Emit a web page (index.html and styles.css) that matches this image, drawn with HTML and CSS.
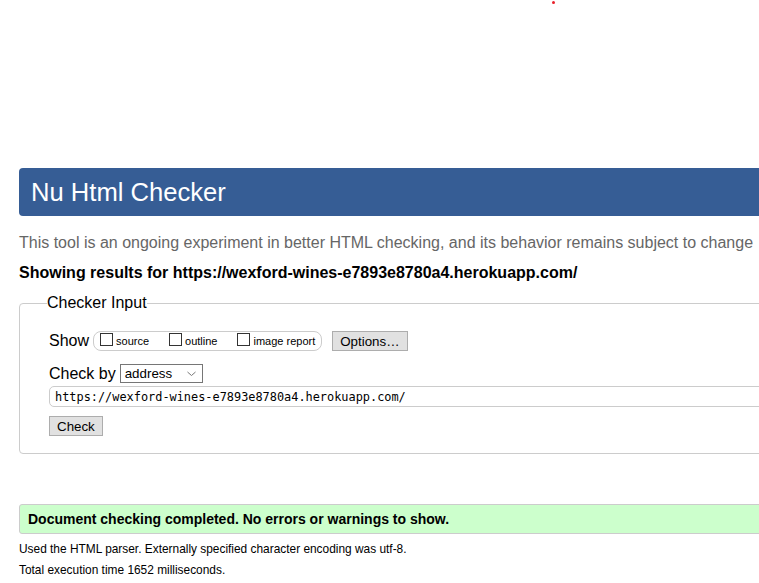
FILE: index.html
```html
<!DOCTYPE html>
<html lang="en">
<head>
<meta charset="utf-8">
<title>Nu Html Checker</title>
<link rel="stylesheet" href="styles.css">
</head>
<body>
<span class="dot"></span>
<div class="page">
  <h1 class="header">Nu Html Checker</h1>
  <p class="intro">This tool is an ongoing experiment in better HTML checking, and its behavior remains subject to change</p>
  <p class="showing">Showing results for https://wexford-wines-e7893e8780a4.herokuapp.com/</p>
  <fieldset class="checker">
    <legend class="legend">Checker Input</legend>
    <div class="row">
      <span class="label">Show</span>
      <span class="group">
        <label class="opt"><input type="checkbox" class="box"><span>source</span></label>
        <label class="opt"><input type="checkbox" class="box"><span>outline</span></label>
        <label class="opt last"><input type="checkbox" class="box"><span>image report</span></label>
      </span>
      <button class="btn options" type="button">Options…</button>
    </div>
    <div class="row">
      <span class="label">Check by</span>
      <span class="select">address<svg class="chev" width="9" height="6" viewBox="0 0 9 6"><path d="M0.5 1 L4.5 4.5 L8.5 1" fill="none" stroke="#777" stroke-width="1"/></svg></span>
    </div>
    <div class="url">https://wexford-wines-e7893e8780a4.herokuapp.com/</div>
    <div class="row"><button class="btn" type="button">Check</button></div>
  </fieldset>
  <p class="success">Document checking completed. No errors or warnings to show.</p>
  <p class="meta">Used the HTML parser. Externally specified character encoding was utf-8.</p>
  <p class="meta">Total execution time 1652 milliseconds.</p>
</div>
</body>
</html>
```
FILE: styles.css
```css
html, body {
  overflow: hidden;
}
body {
  margin: 0;
  font-family: "Liberation Sans", Arial, sans-serif;
  color: #000;
  background: #fff;
  position: relative;
}
.dot {
  position: absolute;
  left: 552px;
  top: 1px;
  width: 3px;
  height: 3px;
  border-radius: 50%;
  background: #e8202a;
}
.page {
  width: 1000px;
  padding: 168px 0 0 19px;
}
.header {
  margin: 0;
  height: 48px;
  box-sizing: border-box;
  display: flex;
  align-items: center;
  padding: 0 12px;
  background: #365d95;
  color: #fff;
  font-size: 25.6px;
  font-weight: normal;
  border-radius: 4px;
}
.intro {
  margin: 18px 0 0;
  font-size: 16px;
  line-height: 18px;
  color: #666;
}
.showing {
  margin: 12px 0 0;
  font-size: 16px;
  line-height: 18px;
  font-weight: bold;
}
.checker {
  margin: 12px 0 0;
  padding: 19px 0 17px 29px;
  border: 1px solid #ccc;
  border-radius: 4px;
  display: flex;
  flex-direction: column;
}
.legend {
  padding: 0;
  margin-left: -2px;
  font-size: 16px;
  line-height: 18px;
}
.row {
  display: flex;
  align-items: center;
}
.row + .row {
  margin-top: 13px;
}
.label {
  font-size: 16px;
  margin-right: 4px;
}
.group {
  display: flex;
  align-items: center;
  height: 18px;
  padding: 0 6px;
  border: 1px solid #ccc;
  border-radius: 8px;
  font-size: 11px;
}
.opt {
  display: flex;
  align-items: center;
  margin-right: 20px;
}
.opt.last {
  margin-right: 0;
}
.box {
  appearance: none;
  -webkit-appearance: none;
  width: 13px;
  height: 13px;
  margin: -3px 3px 0 0;
  border: 1px solid #333;
  background: #fff;
  box-sizing: border-box;
}
.btn {
  font-family: "Liberation Sans", Arial, sans-serif;
  font-size: 13.33px;
  height: 20px;
  padding: 0 7px;
  background: #e1e1e1;
  border: 1px solid #adadad;
  color: #000;
  border-radius: 0;
}
.options {
  margin-left: 10px;
}
.select {
  display: flex;
  align-items: center;
  justify-content: space-between;
  width: 83px;
  height: 19px;
  box-sizing: border-box;
  padding: 0 6px 0 4px;
  border: 1px solid #767676;
  font-size: 13.33px;
}
.chev {
  display: block;
}
.url {
  margin-top: 3px;
  height: 21px;
  box-sizing: border-box;
  display: flex;
  align-items: center;
  padding-left: 5px;
  border: 1px solid #ccc;
  border-radius: 5px;
  font-family: "DejaVu Sans Mono", "Liberation Mono", monospace;
  font-size: 11.9px;
}
.url + .row {
  margin-top: 9px;
}
.success {
  margin: 50px 0 0;
  height: 30px;
  box-sizing: border-box;
  display: flex;
  align-items: center;
  padding-left: 8px;
  background: #ccffcc;
  border: 1px solid #ccc;
  border-radius: 3px;
  font-size: 14px;
  font-weight: bold;
}
.meta {
  margin: 8px 0 0;
  font-size: 11.9px;
  line-height: 14px;
}
.meta + .meta {
  margin-top: 7px;
}
```
